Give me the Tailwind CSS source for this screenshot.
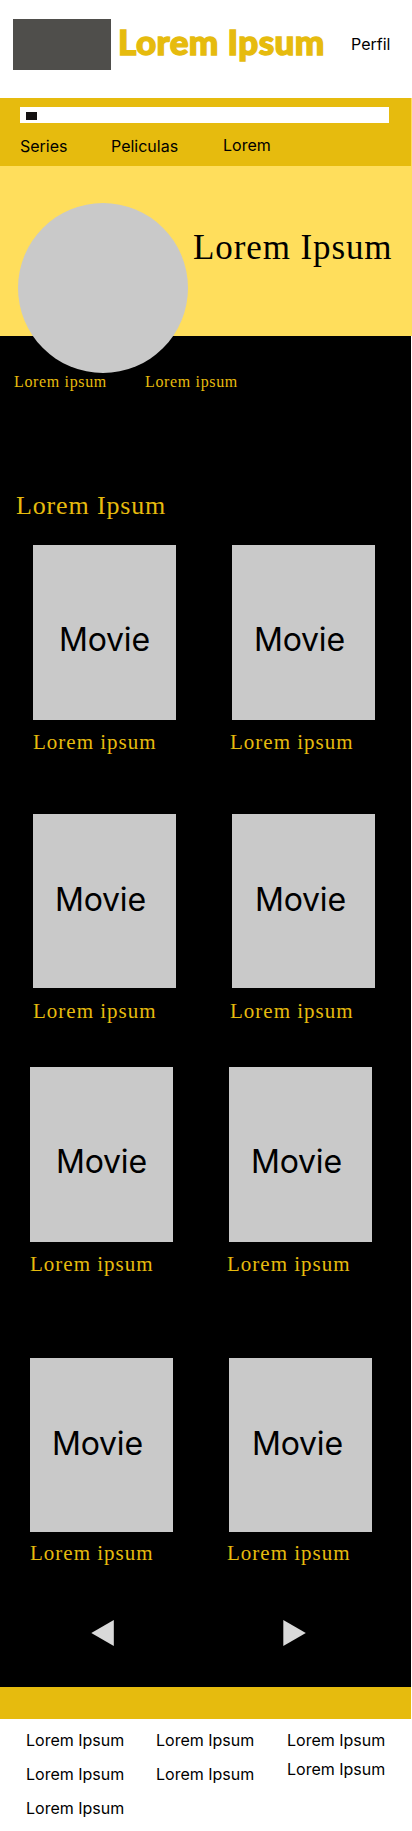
<!DOCTYPE html>
<html lang="es">
<head>
<meta charset="utf-8">
<title>Lorem Ipsum</title>
<script src="https://cdn.jsdelivr.net/npm/@tailwindcss/browser@4"></script>
</head>
<body class="w-[412px] bg-white font-['Inter',sans-serif] text-base leading-[19px] text-black">
  <header class="flex h-[98px] items-start pl-[13px] pt-[19px]">
    <div class="h-[51px] w-[98px] shrink-0 bg-[#4f4e4b]"></div>
    <h1 class="ml-[7px] w-[220px] shrink-0 whitespace-nowrap font-['Lato',sans-serif] text-[35px] font-black leading-[44px] tracking-[0.4px] text-[#e6bb0e] [-webkit-text-stroke:1.4px_#e6bb0e]">Lorem Ipsum</h1>
    <a class="ml-[13px] mt-4">Perfil</a>
  </header>

  <div class="bg-[#ffde5c]">
    <nav class="h-[68px] w-[411px] bg-[#e6bb0e] pl-5 pt-[9px]">
      <div class="flex h-4 w-[369px] bg-white pl-[6px] pt-[5px]"><div class="h-2 w-[11px] bg-[#141111]"></div></div>
      <div class="flex pt-[13px]">
        <a class="mt-px w-[91px]">Series</a>
        <a class="mt-px w-[112px]">Peliculas</a>
        <a>Lorem</a>
      </div>
    </nav>
    <section class="flex h-[170px] pl-[18px]">
      <div class="relative z-10 mt-[37px] size-[170px] shrink-0 rounded-full bg-[#c9c9c9]"></div>
      <h2 class="ml-[5px] mt-[62px] whitespace-nowrap font-['Liberation_Serif',serif] text-[35px] leading-10 tracking-[0.9px]">Lorem Ipsum</h2>
    </section>
  </div>

  <main class="h-[1351px] w-[411px] bg-black pt-9 font-['Liberation_Serif',serif] text-[#e6bb0e]">
    <div class="flex h-5 pl-[14px] text-base leading-5 tracking-[0.65px]">
      <span class="w-[131px]">Lorem ipsum</span><span>Lorem ipsum</span>
    </div>
    <h3 class="mt-[99px] pl-[16px] text-[26px] leading-[30px] tracking-[0.85px]">Lorem Ipsum</h3>

    <section class="mt-[24px] flex h-[269px] gap-14 pl-[33px] text-[21px] leading-6 tracking-[1px]">
      <article class="w-[143px]">
        <div class="h-[175px] bg-[#c9c9c9] pl-[26px] pt-[75px] font-['Inter',sans-serif] text-[32px] leading-[39px] tracking-[-0.2px] text-black">Movie</div>
        <p class="mt-[10px] whitespace-nowrap">Lorem ipsum</p>
      </article>
      <article class="w-[143px]">
        <div class="h-[175px] bg-[#c9c9c9] pl-[22px] pt-[75px] font-['Inter',sans-serif] text-[32px] leading-[39px] tracking-[-0.2px] text-black">Movie</div>
        <p class="-ml-[2px] mt-[10px] whitespace-nowrap">Lorem ipsum</p>
      </article>
    </section>

    <section class="flex h-[253px] gap-14 pl-[33px] text-[21px] leading-6 tracking-[1px]">
      <article class="w-[143px]">
        <div class="h-[174px] bg-[#c9c9c9] pl-[22px] pt-[66px] font-['Inter',sans-serif] text-[32px] leading-[39px] tracking-[-0.2px] text-black">Movie</div>
        <p class="mt-[11px] whitespace-nowrap">Lorem ipsum</p>
      </article>
      <article class="w-[143px]">
        <div class="h-[174px] bg-[#c9c9c9] pl-[23px] pt-[66px] font-['Inter',sans-serif] text-[32px] leading-[39px] tracking-[-0.2px] text-black">Movie</div>
        <p class="-ml-[2px] mt-[11px] whitespace-nowrap">Lorem ipsum</p>
      </article>
    </section>

    <section class="flex h-[291px] gap-14 pl-[30px] text-[21px] leading-6 tracking-[1px]">
      <article class="w-[143px]">
        <div class="h-[175px] bg-[#c9c9c9] pl-[26px] pt-[75px] font-['Inter',sans-serif] text-[32px] leading-[39px] tracking-[-0.2px] text-black">Movie</div>
        <p class="mt-[10px] whitespace-nowrap">Lorem ipsum</p>
      </article>
      <article class="w-[143px]">
        <div class="h-[175px] bg-[#c9c9c9] pl-[22px] pt-[75px] font-['Inter',sans-serif] text-[32px] leading-[39px] tracking-[-0.2px] text-black">Movie</div>
        <p class="-ml-[2px] mt-[10px] whitespace-nowrap">Lorem ipsum</p>
      </article>
    </section>

    <section class="flex h-[262px] gap-14 pl-[30px] text-[21px] leading-6 tracking-[1px]">
      <article class="w-[143px]">
        <div class="h-[174px] bg-[#c9c9c9] pl-[22px] pt-[66px] font-['Inter',sans-serif] text-[32px] leading-[39px] tracking-[-0.2px] text-black">Movie</div>
        <p class="mt-[9px] whitespace-nowrap">Lorem ipsum</p>
      </article>
      <article class="w-[143px]">
        <div class="h-[174px] bg-[#c9c9c9] pl-[23px] pt-[66px] font-['Inter',sans-serif] text-[32px] leading-[39px] tracking-[-0.2px] text-black">Movie</div>
        <p class="-ml-[2px] mt-[9px] whitespace-nowrap">Lorem ipsum</p>
      </article>
    </section>

    <div class="flex justify-between pl-[91px] pr-[105px]">
      <svg class="h-[26px] w-[23px]" viewBox="0 0 23 26" fill="#d9d9d9"><path d="M0.3 13 22.8 0v26z"/></svg>
      <svg class="h-[26px] w-[23px]" viewBox="0 0 23 26" fill="#d9d9d9"><path d="M22.8 13 0.3 0v26z"/></svg>
    </div>
  </main>

  <footer>
    <div class="h-8 w-[411px] bg-[#e6bb0e]"></div>
    <div class="flex h-[112px] items-start whitespace-nowrap pl-[26px] pt-3">
      <div class="flex w-[130px] flex-col gap-[15px]"><a>Lorem Ipsum</a><a>Lorem Ipsum</a><a>Lorem Ipsum</a></div>
      <div class="flex w-[131px] flex-col gap-[15px]"><a>Lorem Ipsum</a><a>Lorem Ipsum</a></div>
      <div class="flex flex-col gap-[10px]"><a>Lorem Ipsum</a><a>Lorem Ipsum</a></div>
    </div>
  </footer>
</body>
</html>
